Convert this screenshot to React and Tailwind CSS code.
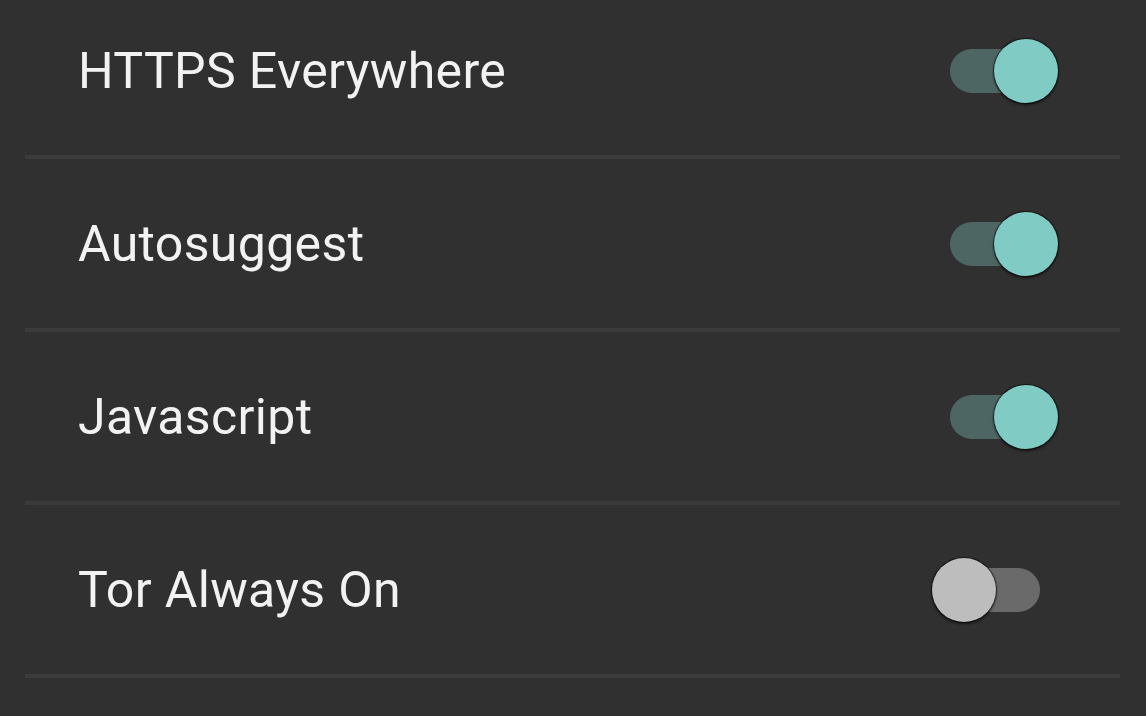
import React from "react";

const rows = [
  { label: "HTTPS Everywhere", on: true },
  { label: "Autosuggest", on: true },
  { label: "Javascript", on: true },
  { label: "Tor Always On", on: false },
];

function Toggle({ on }) {
  return (
    <div className="relative w-[126px] h-[66px] flex items-center">
      <div
        className={
          "absolute left-[18px] w-[90px] h-[44px] rounded-full " +
          (on ? "bg-[#4e6663]" : "bg-[#6a6a6a]")
        }
      />
      <div
        className={
          "absolute top-[1px] w-[64px] h-[64px] rounded-full shadow-[0_2px_3px_rgba(0,0,0,0.6),0_0_1px_1px_rgba(0,0,0,0.55)] " +
          (on ? "left-[62px] bg-[#80cbc4]" : "left-0 bg-[#bdbdbd]")
        }
      />
    </div>
  );
}

export default function App() {
  return (
    <div
      className="w-[1146px] h-[716px] overflow-hidden bg-[#303030]"
      style={{ fontFamily: "Roboto, 'Noto Sans', sans-serif" }}
    >
      <div className="-mt-[14px] ml-[25px] mr-[26px] flex flex-col">
        {rows.map((r) => (
          <div key={r.label} className="flex flex-col">
            <div className="h-[169px] flex items-center justify-between pl-[53px] pr-[62px]">
              <span className="text-[50px] leading-none tracking-[0.35px] text-[#f2f2f2]">
                {r.label}
              </span>
              <Toggle on={r.on} />
            </div>
            <div className="h-[4px] bg-[#3b3b3b]" />
          </div>
        ))}
      </div>
    </div>
  );
}
